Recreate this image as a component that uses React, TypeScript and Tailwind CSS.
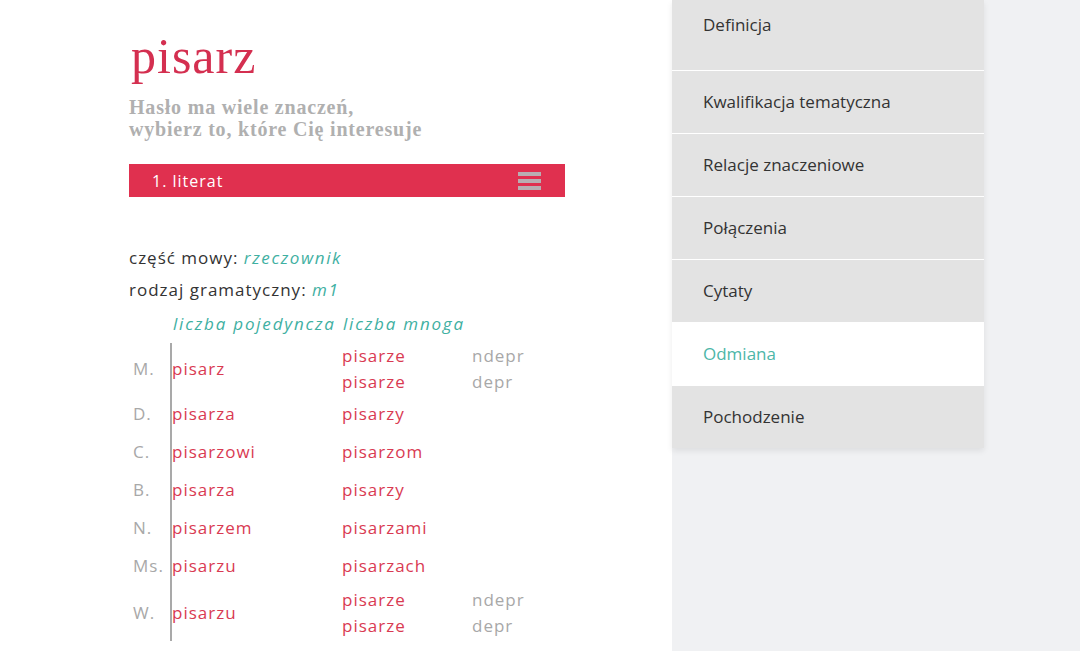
import React from 'react';

const sans = "font-['Open_Sans',_'Noto_Sans',_sans-serif]";
const serif = "font-['Liberation_Serif',_'DejaVu_Serif',_serif]";

interface CaseRow {
    label: string;
    singular: string;
    plural: { form: string; note?: string }[];
}

const rows: CaseRow[] = [
    { label: 'M.', singular: 'pisarz', plural: [{ form: 'pisarze', note: 'ndepr' }, { form: 'pisarze', note: 'depr' }] },
    { label: 'D.', singular: 'pisarza', plural: [{ form: 'pisarzy' }] },
    { label: 'C.', singular: 'pisarzowi', plural: [{ form: 'pisarzom' }] },
    { label: 'B.', singular: 'pisarza', plural: [{ form: 'pisarzy' }] },
    { label: 'N.', singular: 'pisarzem', plural: [{ form: 'pisarzami' }] },
    { label: 'Ms.', singular: 'pisarzu', plural: [{ form: 'pisarzach' }] },
    { label: 'W.', singular: 'pisarzu', plural: [{ form: 'pisarze', note: 'ndepr' }, { form: 'pisarze', note: 'depr' }] },
];

const menu = [
    'Definicja',
    'Kwalifikacja tematyczna',
    'Relacje znaczeniowe',
    'Połączenia',
    'Cytaty',
    'Odmiana',
    'Pochodzenie',
];

function MenuIcon() {
    return (
        <div className="flex flex-col gap-[3px] w-[23px]">
            <span className="h-[4px] bg-[#b9aeb2]" />
            <span className="h-[4px] bg-[#b9aeb2]" />
            <span className="h-[4px] bg-[#b9aeb2]" />
        </div>
    );
}

function Declension() {
    return (
        <div className={`${sans} text-[17px] tracking-[1px]`}>
            <div className="flex h-[32px] items-center italic text-[#3fb0a2] tracking-[1.8px]">
                <span className="w-[44px]" />
                <span className="w-[170px]">liczba pojedyncza</span>
                <span>liczba mnoga</span>
            </div>
            <div className="mt-[3px]">
                {rows.map((row, i) => {
                    const double = row.plural.length > 1;
                    const last = i === rows.length - 1;
                    return (
                        <div key={i} className={`flex ${double ? (last ? 'h-[56px]' : 'h-[52px]') : 'h-[38px]'}`}>
                            <div className="w-[41px] pl-[4px] flex items-center text-[#a8a8a8]">{row.label}</div>
                            <div className="flex flex-1 border-l-2 border-[#a9a9a9]">
                                <div className="w-[170px] flex items-center text-[#d93a52]">{row.singular}</div>
                                <div className="flex flex-col justify-center">
                                    {row.plural.map((p, j) => (
                                        <div key={j} className={`flex ${double ? 'h-[26px]' : ''} items-center`}>
                                            <span className="w-[130px] text-[#d93a52]">{p.form}</span>
                                            {p.note && <span className="text-[#a8a8a8]">{p.note}</span>}
                                        </div>
                                    ))}
                                </div>
                            </div>
                        </div>
                    );
                })}
            </div>
        </div>
    );
}

export default function App() {
    return (
        <div className="flex w-[1080px] h-[651px] overflow-hidden bg-[#f0f1f3]">
            <main className="w-[672px] shrink-0 bg-white pl-[129px] pt-[26px]">
                <h1 className={`${serif} text-[50px] leading-[60px] text-[#d42f50] pl-[2px] tracking-[1px]`}>pisarz</h1>
                <p className={`${serif} mt-[10px] text-[20px] leading-[22px] font-bold text-[#b0b0b0] tracking-[0.8px]`}>
                    Hasło ma wiele znaczeń,<br />wybierz to, które Cię interesuje
                </p>
                <div className={`${sans} mt-[24px] w-[436px] h-[33px] bg-[#e0304f] flex items-center justify-between pl-[23px] pr-[24px] text-white text-[16px] tracking-[1px]`}>
                    <span>1. literat</span>
                    <MenuIcon />
                </div>
                <div className={`${sans} mt-[45px] text-[17px] leading-[32px] text-[#333] tracking-[1px]`}>
                    <p>część mowy: <span className="italic text-[#3fb0a2] tracking-[1.6px]">rzeczownik</span></p>
                    <p>rodzaj gramatyczny: <span className="italic text-[#3fb0a2] tracking-[1.6px]">m1</span></p>
                </div>
                <div className="mt-[2px]">
                    <Declension />
                </div>
            </main>
            <aside className="flex-1">
                <nav className={`${sans} w-[312px] shadow-[0_3px_6px_rgba(0,0,0,0.08)] text-[17px] text-[#333]`}>
                    {menu.map((item, i) => {
                        const active = item === 'Odmiana';
                        return (
                            <div
                                key={item}
                                className={`px-[31px] flex ${i === 0 ? 'h-[70px] items-start pt-[12px]' : 'h-[63px] items-center'} ${i > 0 ? 'border-t border-white' : ''} ${active ? 'bg-white text-[#4db6a8]' : 'bg-[#e3e3e3]'}`}
                            >
                                {item}
                            </div>
                        );
                    })}
                </nav>
            </aside>
        </div>
    );
}
